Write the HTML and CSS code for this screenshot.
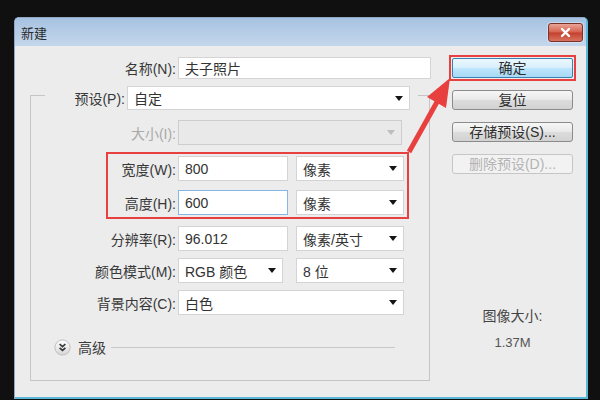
FILE: index.html
```html
<!DOCTYPE html>
<html lang="zh-CN">
<head>
    <meta charset="UTF-8">
    <title>新建</title>
    <link rel="stylesheet" href="styles.css">
</head>
<body>
    <div class="dialog">
        <div class="titlebar">
            <span class="title">新建</span>
            <button class="close">
                <svg width="13" height="11" viewBox="0 0 13 11"><path d="M3 2 L10 9 M10 2 L3 9" stroke="#fff" stroke-width="2.4" stroke-linecap="round"/></svg>
            </button>
        </div>
        <div class="content">
            <div class="main">
                <div class="row name-row">
                    <span class="lbl">名称(N):</span>
                    <div class="field name-field">夫子照片</div>
                </div>
                <fieldset class="group">
                    <legend class="preset">
                        <div class="row">
                            <span class="lbl preset-lbl">预设(P):</span>
                            <div class="field select preset-select"><span>自定</span><i class="caret"></i></div>
                        </div>
                    </legend>
                    <div class="group-body">
                        <div class="row">
                            <span class="lbl lbl-wide dis">大小(I):</span>
                            <div class="field select disabled size-select"><span></span><i class="caret"></i></div>
                        </div>
                        <div class="highlight">
                            <div class="row">
                                <span class="lbl lbl-short">宽度(W):</span>
                                <div class="field in-small">800</div>
                                <div class="field select sel-small"><span>像素</span><i class="caret"></i></div>
                            </div>
                            <div class="row">
                                <span class="lbl lbl-short">高度(H):</span>
                                <div class="field in-small focus">600</div>
                                <div class="field select sel-small"><span>像素</span><i class="caret"></i></div>
                            </div>
                        </div>
                        <div class="row">
                            <span class="lbl lbl-wide">分辨率(R):</span>
                            <div class="field in-small">96.012</div>
                            <div class="field select sel-small"><span>像素/英寸</span><i class="caret"></i></div>
                        </div>
                        <div class="row">
                            <span class="lbl lbl-wide">颜色模式(M):</span>
                            <div class="field select mode-select"><span>RGB 颜色</span><i class="caret"></i></div>
                            <div class="field select sel-small bits"><span>8 位</span><i class="caret"></i></div>
                        </div>
                        <div class="row">
                            <span class="lbl lbl-wide">背景内容(C):</span>
                            <div class="field select bg-select"><span>白色</span><i class="caret"></i></div>
                        </div>
                        <div class="advanced">
                            <svg width="17" height="17" viewBox="0 0 17 17">
                                <defs>
                                    <linearGradient id="knob" x1="0" y1="0" x2="0" y2="1">
                                        <stop offset="0" stop-color="#ffffff"/>
                                        <stop offset="1" stop-color="#d6d6d6"/>
                                    </linearGradient>
                                </defs>
                                <circle cx="8.5" cy="8.5" r="7.6" fill="url(#knob)" stroke="#bdbdbd"/>
                                <path d="M5.6 5 L8.5 7.6 L11.4 5 M5.6 8.8 L8.5 11.4 L11.4 8.8" fill="none" stroke="#333" stroke-width="1.6"/>
                            </svg>
                            <span>高级</span>
                            <div class="adv-line"></div>
                        </div>
                    </div>
                </fieldset>
            </div>
            <div class="side">
                <div class="ok-ring">
                    <button class="btn default">确定</button>
                </div>
                <button class="btn">复位</button>
                <button class="btn">存储预设(S)...</button>
                <button class="btn" disabled>删除预设(D)...</button>
                <div class="img-size">
                    <div class="img-lbl">图像大小:</div>
                    <div class="img-val">1.37M</div>
                </div>
            </div>
        </div>
    </div>

    <svg class="arrow" width="600" height="400" viewBox="0 0 600 400">
        <line x1="409" y1="152" x2="437" y2="102" stroke="#e8403f" stroke-width="5"/>
        <polygon points="450,78 446,108 427,97" fill="#e8403f"/>
    </svg>
</body>
</html>
```

FILE: styles.css
```css
body {
    margin: 0;
    background: #101010;
    font-family: "Liberation Sans", "Noto Sans CJK SC", sans-serif;
    font-size: 14px;
    color: #3a3a3a;
}

.dialog {
    margin: 17px 0 0 14px;
    width: 574px;
    height: 382px;
    box-sizing: border-box;
    border: 1px solid #8da7c4;
    border-right: 2px solid #5bb7d8;
    border-bottom: 2px solid #5bb7d8;
    border-radius: 5px 5px 0 0;
    background: #ececec;
    display: flex;
    flex-direction: column;
    overflow: hidden;
}

.titlebar {
    height: 28px;
    flex-shrink: 0;
    display: flex;
    align-items: center;
    justify-content: space-between;
    padding: 0 3px 0 6px;
    background: linear-gradient(#a6c2e1, #c4d7ec);
}

.title {
    font-size: 13px;
    color: #2c2c2c;
}

.close {
    width: 35px;
    height: 19px;
    padding: 0;
    margin-top: 1px;
    display: flex;
    align-items: center;
    justify-content: center;
    border: 1px solid #7a3128;
    border-radius: 3px;
    background: linear-gradient(#e9a496, #d56350 48%, #c2402d 52%, #d8735f);
    box-shadow: 0 0 0 1px rgba(255, 255, 255, 0.35);
}

.content {
    flex: 1;
    display: flex;
}

.main {
    width: 425px;
    box-sizing: border-box;
    padding: 11px 0 0 15px;
}

.row {
    display: flex;
    align-items: center;
    gap: 2px;
    height: 25px;
}

.lbl {
    flex-shrink: 0;
    text-align: right;
    white-space: nowrap;
    color: #383838;
}

.lbl.dis {
    color: #a9a9a9;
}

.name-row {
    height: 22px;
}

.name-row .lbl {
    width: 146px;
}

.lbl-wide {
    width: 145px;
}

.lbl-short {
    width: 66px;
}

.preset-lbl {
    width: 55px;
}

.field {
    box-sizing: border-box;
    height: 100%;
    display: flex;
    align-items: center;
    justify-content: space-between;
    padding: 0 6px;
    background: #fff;
    border: 1px solid #d4d4d4;
    color: #333;
    white-space: nowrap;
}

.field.focus {
    border-color: #86b6e6;
}

.field.disabled {
    background: #e9e9e9;
    border-color: #cdcdcd;
}

.caret {
    width: 0;
    height: 0;
    border-left: 4px solid transparent;
    border-right: 4px solid transparent;
    border-top: 5px solid #151515;
}

.disabled .caret {
    border-top-color: #bdbdbd;
}

.name-field {
    width: 253px;
}

.group {
    margin: 1px 0 0 0;
    padding: 0;
    width: 400px;
    box-sizing: border-box;
    border: 1px solid #c5c5c5;
    min-width: 0;
}

.preset {
    margin-left: 14px;
    padding: 6px 8px 0 25px;
}

.preset .row {
    height: 24px;
}

.preset-select {
    width: 283px;
}

.group-body {
    display: flex;
    flex-direction: column;
    gap: 7px;
    padding: 10px 0 23px 0;
}

.size-select {
    width: 224px;
}

.highlight {
    align-self: flex-start;
    margin-left: 75px;
    width: 303px;
    box-sizing: border-box;
    border: 2px solid #e8403f;
    padding: 2px;
    display: flex;
    flex-direction: column;
    gap: 9px;
}

.in-small {
    width: 110px;
}

.sel-small {
    width: 108px;
    margin-left: 6px;
}

.mode-select {
    width: 105px;
}

.bits {
    margin-left: 11px;
}

.bg-select {
    width: 226px;
}

.advanced {
    display: flex;
    align-items: center;
    gap: 7px;
    height: 20px;
    margin-top: 15px;
    padding-left: 23px;
}

.adv-line {
    flex: 1;
    height: 1px;
    margin: 0 34px 0 -2px;
    background: #c8c8c8;
}

.side {
    display: flex;
    flex-direction: column;
    gap: 12px;
    padding: 12px 0 0 12px;
}

.ok-ring {
    margin: -3px 0 -3px -3px;
    width: 127px;
    box-sizing: border-box;
    border: 2px solid #e8403f;
    padding: 1px;
}

.btn {
    display: block;
    width: 121px;
    height: 20px;
    padding: 0;
    font-family: inherit;
    font-size: 14px;
    line-height: 18px;
    color: #2e2e2e;
    border: 1px solid #8b8b8b;
    border-radius: 3px;
    background: linear-gradient(#f7f7f7, #e9e9e9 48%, #dcdcdc 52%, #d2d2d2);
}

.btn.default {
    border-color: #3c7fb1;
    border-radius: 2px;
    background: linear-gradient(#eaf6fd, #d9f0fc 48%, #bee6fd 52%, #a7d9f5);
}

.btn:disabled {
    color: #b3b3b3;
    border-color: #c6c6c6;
    background: #f2f2f2;
}

.img-size {
    width: 121px;
    margin-top: 120px;
    text-align: center;
}

.img-lbl {
    line-height: 20px;
    color: #444;
}

.img-val {
    margin-top: 7px;
    line-height: 20px;
    font-size: 13px;
    color: #555;
}

.arrow {
    position: absolute;
    top: 0;
    left: 0;
    pointer-events: none;
}
```
